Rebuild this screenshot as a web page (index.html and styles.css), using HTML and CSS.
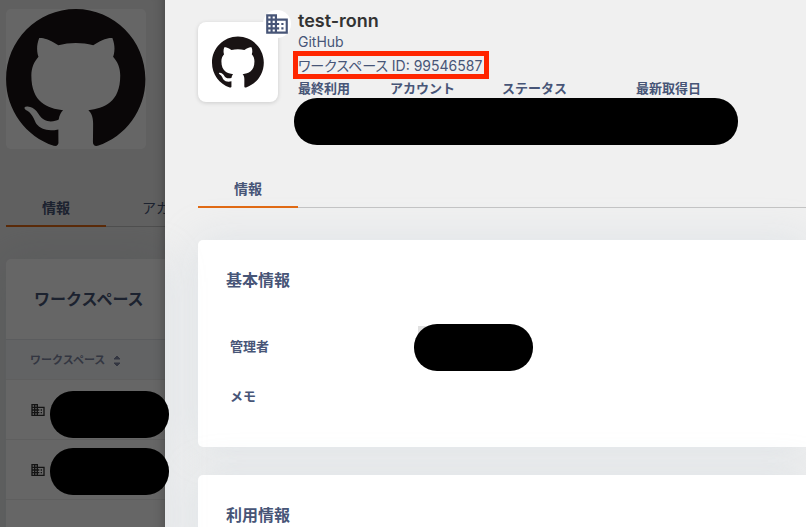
FILE: index.html
```html
<!DOCTYPE html>
<html lang="ja">
<head>
  <meta charset="UTF-8">
  <title>test-ronn - GitHub</title>
  <meta name="viewport" content="width=device-width, initial-scale=1.0">
  <link rel="stylesheet" href="styles.css">
</head>
<body>

  <svg class="defs" aria-hidden="true">
    <symbol id="github" viewBox="0 0 98 96">
      <path d="M48.854 0C21.839 0 0 22 0 49.217c0 21.756 13.993 40.172 33.405 46.69 2.427.49 3.316-1.059 3.316-2.362 0-1.141-.08-5.052-.08-9.127-13.59 2.934-16.42-5.867-16.42-5.867-2.184-5.704-5.42-7.17-5.42-7.17-4.448-3.015.324-3.015.324-3.015 4.934.326 7.523 5.052 7.523 5.052 4.367 7.496 11.404 5.378 14.235 4.074.404-3.178 1.699-5.378 3.074-6.6-10.839-1.141-22.243-5.378-22.243-24.283 0-5.378 1.94-9.778 5.014-13.2-.485-1.222-2.184-6.275.486-13.038 0 0 4.125-1.304 13.426 5.052a46.97 46.97 0 0 1 12.214-1.63c4.125 0 8.33.571 12.213 1.63 9.302-6.356 13.427-5.052 13.427-5.052 2.67 6.763.97 11.816.485 13.038 3.155 3.422 5.015 7.822 5.015 13.2 0 18.905-11.404 23.06-22.324 24.283 1.78 1.548 3.316 4.481 3.316 9.126 0 6.6-.08 11.897-.08 13.526 0 1.304.89 2.853 3.316 2.364 19.412-6.52 33.405-24.935 33.405-46.691C97.707 22 75.788 0 48.854 0z"/>
    </symbol>
    <symbol id="building" viewBox="0 0 24 24">
      <path d="M12 7V3H2v18h20V7H12zM6 19H4v-2h2v2zm0-4H4v-2h2v2zm0-4H4V9h2v2zm0-4H4V5h2v2zm4 12H8v-2h2v2zm0-4H8v-2h2v2zm0-4H8V9h2v2zm0-4H8V5h2v2zm10 12h-8v-2h2v-2h-2v-2h2v-2h-2V9h8v10zm-2-8h-2v2h2v-2zm0 4h-2v2h2v-2z"/>
    </symbol>
    <symbol id="sort" viewBox="0 0 8 12">
      <path d="M4 1l3 3H1zM4 11l3-3H1z" stroke-linejoin="round" stroke="currentColor"/>
    </symbol>
  </svg>

  <!-- page behind the drawer -->
  <main class="page">
    <div class="page-logo"><svg><use href="#github"/></svg></div>

    <nav class="tabs">
      <a href="#" class="tab active">情報</a>
      <a href="#" class="tab">アカウント</a>
    </nav>

    <section class="card list">
      <h2>ワークスペース</h2>
      <div class="table-wrap">
        <table>
          <thead>
            <tr><th>ワークスペース <svg class="sort"><use href="#sort"/></svg></th></tr>
          </thead>
          <tbody>
            <tr><td><svg class="building"><use href="#building"/></svg></td></tr>
            <tr><td><svg class="building"><use href="#building"/></svg></td></tr>
          </tbody>
        </table>
        <div class="masks">
          <span class="mask"></span>
          <span class="mask"></span>
        </div>
      </div>
    </section>
  </main>

  <aside class="drawer">
    <header class="head">
      <div class="logo">
        <svg class="mark"><use href="#github"/></svg>
        <span class="badge"><svg><use href="#building"/></svg></span>
      </div>
      <div class="head-info">
        <h1>test-ronn</h1>
        <p class="service">GitHub</p>
        <p class="workspace-id">ワークスペース ID: 99546587</p>
        <div class="stats">
          <span>最終利用</span>
          <span>アカウント</span>
          <span>ステータス</span>
          <span>最新取得日</span>
        </div>
        <div class="mask wide"></div>
      </div>
    </header>

    <nav class="tabs">
      <a href="#" class="tab active">情報</a>
    </nav>

    <section class="card">
      <h2>基本情報</h2>
      <dl>
        <dt>管理者</dt>
        <dd><span class="mask user"></span></dd>
        <dt>メモ</dt>
        <dd></dd>
      </dl>
    </section>

    <section class="card">
      <h2>利用情報</h2>
    </section>
  </aside>

</body>
</html>
```

FILE: styles.css
```css
* {
  box-sizing: border-box;
}

body {
  display: flex;
  height: 100vh;
  margin: 0;
  overflow: hidden;
  background: #f0f0f0;
  color: #475577;
  font-family: Inter, "Noto Sans CJK JP", sans-serif;
  font-size: 13px;
}

h1, h2, p, dl, dd {
  margin: 0;
}

svg {
  display: block;
  fill: currentColor;
}

.defs {
  position: absolute;
  width: 0;
  height: 0;
}

/* tabs */
.tabs {
  display: flex;
  overflow: hidden;
  box-shadow: inset 0 -1px #c4c4c4;
}

.tab {
  flex: none;
  min-width: 100px;
  padding: 1px 36px 0;
  border-bottom: 2px solid transparent;
  color: inherit;
  font-size: 14px;
  line-height: 35px;
  text-align: center;
  text-decoration: none;
}

.tab.active {
  border-color: #e06a14;
  font-weight: bold;
}

/* cards */
.card {
  padding: 28px;
  border-radius: 5px 0 0 5px;
  background: #fff;
  box-shadow: 0 0 40px rgba(180, 195, 210, 0.3);
}

.card h2 {
  font-size: 16px;
  line-height: 24px;
}

.mask {
  display: block;
  width: 119px;
  height: 47px;
  border-radius: 23px;
  background: #000;
}

/* page behind */
.page {
  position: relative;
  z-index: 1;
  flex: 0 0 165px;
  min-width: 0;
  padding: 9px 0 0 6px;
}

.page::after {
  content: "";
  position: absolute;
  inset: 0;
  background: rgba(0, 0, 0, 0.6);
  box-shadow: inset -12px 0 12px -12px rgba(0, 0, 0, 0.3);
}

.page-logo {
  width: 140px;
  height: 140px;
  border-radius: 5px;
  background: #fff;
  color: #191314;
}

.page-logo svg {
  width: 140px;
  height: 137px;
}

.page .tabs {
  margin: 40px 0 32px;
}

.list {
  height: 100%;
  padding: 28px 0;
}

.list h2 {
  padding-left: 28px;
}

.table-wrap {
  position: relative;
  margin-top: 28px;
}

table {
  width: 100%;
  border-collapse: collapse;
}

th, td {
  padding: 0 0 0 24px;
  border-bottom: 1px solid #eeeeee;
  text-align: left;
}

th {
  height: 40px;
  padding-bottom: 2px;
  border-top: 1px solid #e4e7ea;
  background: #f4f7fa;
  color: #8087a3;
  font-size: 11px;
  white-space: nowrap;
}

td {
  height: 60px;
  color: #333;
}

.sort {
  display: inline-block;
  width: 8px;
  height: 12px;
  margin-left: 5px;
  vertical-align: middle;
}

.building {
  width: 16px;
  height: 16px;
}

.masks {
  position: absolute;
  top: 52px;
  left: 44px;
  display: flex;
  flex-direction: column;
  gap: 10px;
}

/* drawer */
.drawer {
  flex: 1;
  min-width: 0;
  padding: 9px 0 0 33px;
}

.head {
  display: flex;
  gap: 20px;
}

.logo {
  position: relative;
  display: flex;
  align-items: center;
  justify-content: center;
  flex: none;
  width: 80px;
  height: 80px;
  margin-top: 13px;
  border-radius: 8px;
  background: #fff;
  box-shadow: 0 1px 4px rgba(0, 0, 0, 0.15);
}

.mark {
  width: 52px;
  height: 52px;
  color: #191314;
}

.badge {
  position: absolute;
  top: -12px;
  right: -13px;
  padding: 1px;
  border-radius: 50%;
  background: #fff;
}

.badge svg {
  width: 26px;
  height: 26px;
}

.head-info {
  flex: 1;
  min-width: 0;
}

h1 {
  color: #333;
  font-size: 18px;
  font-weight: 600;
  line-height: 24px;
}

.service, .workspace-id {
  font-size: 14px;
  line-height: 18px;
}

.workspace-id {
  width: 186px;
  margin-top: 5px;
  outline: 5px solid #ff2600;
  font-feature-settings: "palt";
  line-height: 20px;
  height: 18px;
  white-space: nowrap;
}

.stats {
  display: grid;
  grid-template-columns: 92px 112px 134px auto;
  margin-top: 4px;
  font-weight: bold;
  line-height: 20px;
}

.mask.wide {
  width: 444px;
  max-width: 100%;
  margin-left: -4px;
}

.drawer .tabs {
  margin: 25px 0 32px;
}

.drawer .card {
  margin-bottom: 28px;
}

dl {
  display: grid;
  grid-template-columns: 184px 1fr;
  grid-template-rows: 47px 44px;
  row-gap: 4px;
  align-items: center;
  padding: 32px 0 0 4px;
}

dt {
  padding-bottom: 4px;
  font-weight: bold;
}

dd {
  position: relative;
  z-index: 0;
}

/* corner of the avatar under the mask */
.user::before {
  content: "";
  position: absolute;
  z-index: -1;
  top: 2px;
  left: 4px;
  width: 20px;
  height: 20px;
  background: #e0e0e0;
}
```
